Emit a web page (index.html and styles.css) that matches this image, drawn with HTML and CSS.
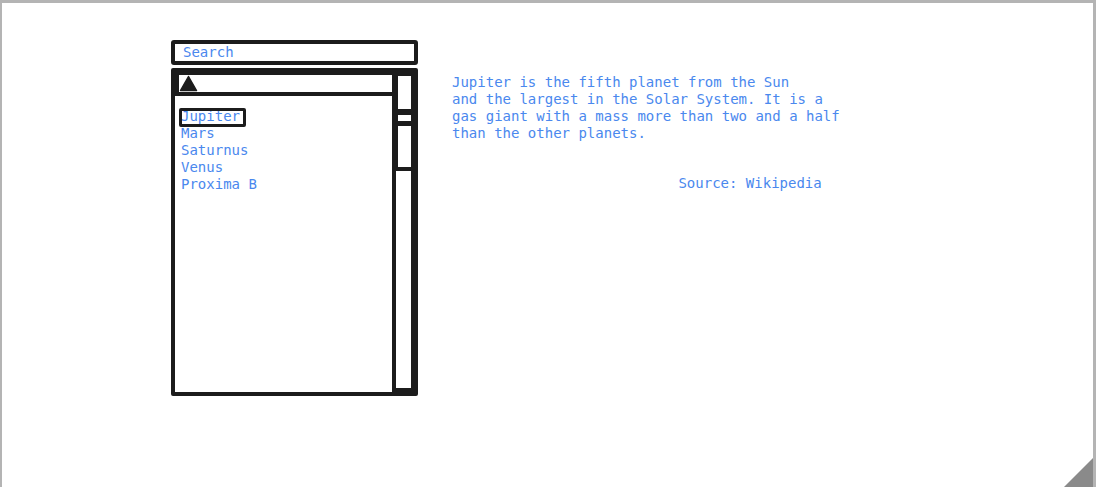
FILE: index.html
```html
<!DOCTYPE html>
<html>
<head>
<meta charset="utf-8">
<link rel="stylesheet" href="styles.css">
</head>
<body>
<div class="frame">
  <div class="widget">
    <div class="search">Search</div>
    <div class="list">
      <div class="list-main">
        <div class="list-header">
          <svg class="up-icon" width="19" height="17" viewBox="0 0 19 17"><polygon points="9.5,1.5 17.5,15.5 1.5,15.5" fill="#1c1c1c" stroke="#1c1c1c" stroke-width="1.5" stroke-linejoin="round"/></svg>
        </div>
        <div class="items">
          <div class="item selected">Jupiter</div>
          <div class="item">Mars</div>
          <div class="item">Saturnus</div>
          <div class="item">Venus</div>
          <div class="item">Proxima B</div>
        </div>
      </div>
      <div class="scroll">
        <div class="sb-btn sb-up"></div>
        <div class="sb-btn sb-small"></div>
        <div class="sb-btn sb-thumb"></div>
        <div class="sb-track"></div>
      </div>
    </div>
  </div>
  <div class="desc">
    <p class="desc-text">Jupiter is the fifth planet from the Sun<br>and the largest in the Solar System. It is a<br>gas giant with a mass more than two and a half<br>than the other planets.</p>
    <p class="source">Source: Wikipedia</p>
  </div>
  <svg class="resize" width="29" height="29" viewBox="0 0 29 29"><polygon points="29,0 29,29 0,29" fill="#8a8a8a"/></svg>
</div>
</body>
</html>
```

FILE: styles.css
```css
html, body {
  margin: 0;
  padding: 0;
  background: #ffffff;
}

.frame {
  position: relative;
  box-sizing: border-box;
  width: 1096px;
  height: 487px;
  border-top: 3px solid #b4b4b4;
  border-left: 2px solid #b4b4b4;
  border-right: 3px solid #b4b4b4;
  padding: 37px 0 0 169px;
  display: flex;
  align-items: flex-start;
  font-family: "DejaVu Sans Mono", "Liberation Mono", monospace;
  font-size: 14px;
  line-height: 17px;
  color: #4a88ee;
  overflow: hidden;
}

.widget {
  width: 247px;
  display: flex;
  flex-direction: column;
}

.search {
  box-sizing: border-box;
  height: 25px;
  border: 4px solid #1c1c1c;
  border-radius: 3px;
  padding-left: 8px;
  line-height: 17px;
}

.list {
  box-sizing: border-box;
  margin-top: 3px;
  height: 328px;
  border: 4px solid #1c1c1c;
  border-radius: 2px;
  display: flex;
}

.list-main {
  flex: 1;
  display: flex;
  flex-direction: column;
}

.list-header {
  height: 17px;
  border-top: 3px solid #1c1c1c;
  border-left: 4px solid #1c1c1c;
  border-bottom: 4px solid #1c1c1c;
  display: flex;
  align-items: center;
  padding-left: 0;
}

.up-icon {
  display: block;
}

.items {
  padding: 11.5px 0 0 6px;
}

.item {
  position: relative;
  white-space: pre;
}

.item.selected::after {
  content: "";
  position: absolute;
  left: -2px;
  top: 0.5px;
  width: 67px;
  height: 19px;
  box-sizing: border-box;
  border: 3px solid #1c1c1c;
  border-radius: 2px;
}

.scroll {
  box-sizing: border-box;
  width: 22px;
  background: #1c1c1c;
  display: flex;
  flex-direction: column;
  align-items: flex-start;
  padding: 4px 3px 4px 6px;
}

.sb-btn {
  width: 13px;
  background: #ffffff;
}

.sb-up {
  height: 33px;
}

.sb-small {
  height: 6px;
  margin-top: 6px;
}

.sb-thumb {
  height: 41px;
  margin-top: 5px;
}

.sb-track {
  margin-top: 4px;
  margin-left: -2px;
  width: 15px;
  height: 217px;
  background: #ffffff;
}

.desc {
  margin-left: 34px;
  padding-top: 33.5px;
}

.desc-text {
  margin: 0;
}

.source {
  margin: 33px 0 0 0;
  text-align: right;
  padding-right: 18px;
}

.resize {
  position: absolute;
  right: 0;
  bottom: 0;
  display: block;
}
```
